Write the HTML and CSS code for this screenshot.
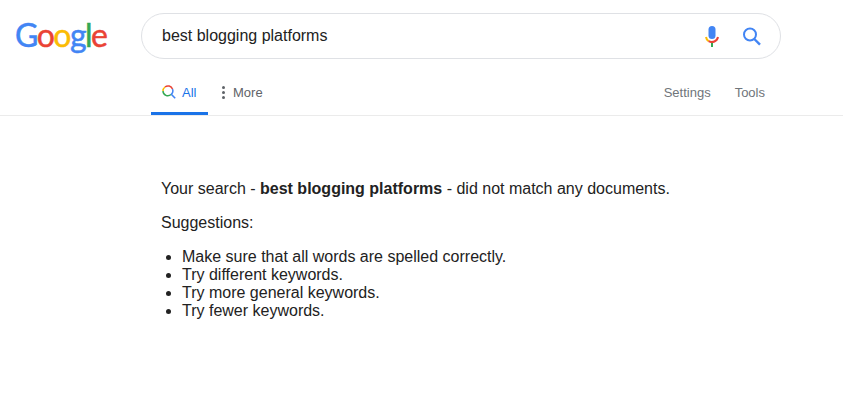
FILE: index.html
```html
<!DOCTYPE html>
<html lang="en">
<head>
    <meta charset="UTF-8">
    <title>best blogging platforms - Google Search</title>
    <link rel="stylesheet" href="styles.css">
</head>
<body>
    <header class="top">
        <div class="logo"><span class="blue">G</span><span class="red">o</span><span class="yellow">o</span><span class="blue">g</span><span class="green">l</span><span class="red">e</span></div>
        <div class="searchbox">
            <span class="query">best blogging platforms</span>
            <svg class="mic" width="16" height="22" viewBox="0 0 16 22">
                <rect x="4.5" y="1" width="7" height="13" rx="3.5" fill="#4285f4"/>
                <path d="M2 12a6.3 6.3 0 0 0 2.6 4.2" fill="none" stroke="#fbbc05" stroke-width="2"/>
                <path d="M4.6 16.2a6.3 6.3 0 0 0 9.4-4.2" fill="none" stroke="#ea4335" stroke-width="2"/>
                <rect x="7" y="18" width="2" height="4" fill="#34a853"/>
            </svg>
            <svg class="lens" width="19" height="19" viewBox="0 0 19 19">
                <circle cx="8" cy="7.5" r="6" fill="none" stroke="#4285f4" stroke-width="2"/>
                <path d="M12.3 12L18 17.7" stroke="#4285f4" stroke-width="2.4"/>
            </svg>
        </div>
    </header>

    <nav class="tabs">
        <a class="tab active">
            <svg width="14" height="14" viewBox="0 0 14 14">
                <path d="M1 6a4.8 4.8 0 0 1 2-4" fill="none" stroke="#fbbc05" stroke-width="1.5"/>
                <path d="M3 2a4.8 4.8 0 0 1 7.5 2" fill="none" stroke="#ea4335" stroke-width="1.5"/>
                <path d="M10.5 4a4.8 4.8 0 0 1-1.5 5.5" fill="none" stroke="#4285f4" stroke-width="1.5"/>
                <path d="M1 6a4.8 4.8 0 0 0 8 3.5" fill="none" stroke="#34a853" stroke-width="1.5"/>
                <path d="M9 9l4.2 4.2" stroke="#4285f4" stroke-width="1.6"/>
            </svg>
            All
        </a>
        <a class="tab">
            <span class="dots"><i></i><i></i><i></i></span>
            More
        </a>
        <div class="tab-right">
            <a class="tool">Settings</a>
            <a class="tool">Tools</a>
        </div>
    </nav>

    <main class="results">
        <p>Your search - <b>best blogging platforms</b> - did not match any documents.</p>
        <p>Suggestions:</p>
        <ul>
            <li>Make sure that all words are spelled correctly.</li>
            <li>Try different keywords.</li>
            <li>Try more general keywords.</li>
            <li>Try fewer keywords.</li>
        </ul>
    </main>
</body>
</html>
```

FILE: styles.css
```css
body {
    font-family: "Liberation Sans", Arial, sans-serif;
    background-color: #fff;
    color: #222;
    margin: 0;
}
.top {
    display: flex;
    align-items: center;
    padding-top: 13px;
}
.logo {
    width: 126px;
    padding-left: 15px;
    font-family: Lato, sans-serif;
    font-size: 32px;
    line-height: 46px;
    height: 46px;
    margin-top: -3px;
    letter-spacing: -1.6px;
    -webkit-text-stroke: 0.5px;
}
.logo span {
    display: inline-block;
}
.blue { color: #4285f4; }
.red { color: #ea4335; }
.yellow { color: #fbbc05; }
.green { color: #34a853; }
.searchbox {
    width: 640px;
    height: 46px;
    box-sizing: border-box;
    border: 1px solid #dfe1e5;
    border-radius: 23px;
    display: flex;
    align-items: center;
    padding: 0 19px 0 20px;
}
.query {
    flex: 1;
    font-size: 16px;
    color: #222;
}
.mic {
    margin-right: 22px;
}
.tabs {
    display: flex;
    height: 45px;
    margin-top: 11px;
    padding-left: 151px;
    padding-right: 78px;
    border-bottom: 1px solid #ebebeb;
    font-size: 13px;
}
.tab {
    display: flex;
    align-items: center;
    gap: 7px;
    height: 44px;
    box-sizing: border-box;
    padding: 0 10px;
    color: #5f6368;
}
.tab svg {
    margin-top: -2px;
}
.tab.active {
    width: 57px;
    gap: 6px;
    color: #1a73e8;
    border-bottom: 3px solid #1a73e8;
    height: 45px;
    padding: 3px 0 0 11px;
    margin-bottom: -1px;
}
.dots {
    display: flex;
    flex-direction: column;
    gap: 2px;
    margin: 0 1px 0 4px;
}
.dots i {
    display: block;
    width: 3px;
    height: 3px;
    border-radius: 50%;
    background: #5f6368;
}
.tab-right {
    margin-left: auto;
    display: flex;
    align-items: center;
    height: 44px;
    gap: 24px;
}
.tool {
    color: #70757a;
}
.results {
    padding: 64px 0 0 161px;
    font-size: 16px;
    line-height: 18px;
}
.results p {
    margin: 0 0 16px;
}
.results ul {
    margin: 0;
    padding-left: 21px;
}
```
